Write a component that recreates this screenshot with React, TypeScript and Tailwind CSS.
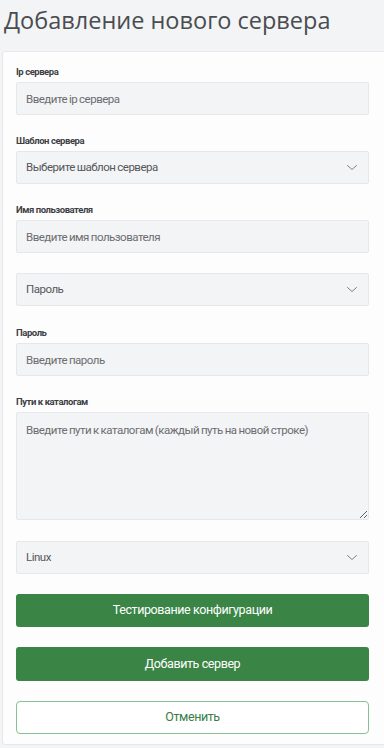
import React from "react";

const Chevron = () => (
  <svg width="12" height="7" viewBox="0 0 12 7" fill="none" stroke="#808080" strokeWidth="1" strokeLinecap="round" strokeLinejoin="round">
    <path d="M1.5 1.5l4.5 4 4.5-4" />
  </svg>
);

const Label = ({ children }: { children: React.ReactNode }) => (
  <label className="block mb-[4px] text-[9.5px] leading-[12px] font-bold text-[#3d3f44] tracking-[-0.45px]">
    {children}
  </label>
);

const inputCls =
  "block w-full h-[33px] px-[9px] bg-[#f3f4f6] border border-[#e5e7eb] rounded-[2px] text-[11.5px] tracking-[-0.5px] [word-spacing:-0.5px] text-[#374151] placeholder:text-[#6b6d70] outline-none";

const Select = ({ value }: { value: string }) => (
  <div className="flex items-center justify-between h-[33px] pl-[9px] pr-[10px] bg-[#f3f4f6] border border-[#e5e7eb] rounded-[2px] text-[11.5px] tracking-[-0.5px] [word-spacing:-0.5px] text-[#55575b]">
    <span>{value}</span>
    <Chevron />
  </div>
);

export default function App() {
  return (
    <div className="min-h-screen w-full overflow-hidden bg-[#f3f4f6] font-['Roboto',sans-serif]">
      <h1 className="pl-[4px] pt-[2px] h-[51px] text-[23.5px] leading-[36px] text-[#4a4c50] font-['Open_Sans',sans-serif]">
        Добавление нового сервера
      </h1>
      <div className="ml-[2px] w-[392px] bg-[#fdfdfe] border border-[#e5e7eb] rounded-[3px] pl-[13px] pr-[24px] pt-[14px] pb-[10px]">
        <div className="mb-5">
          <Label>Ip сервера</Label>
          <input className={inputCls} placeholder="Введите ip сервера" />
        </div>
        <div className="mb-5">
          <Label>Шаблон сервера</Label>
          <Select value="Выберите шаблон сервера" />
        </div>
        <div className="mb-5">
          <Label>Имя пользователя</Label>
          <input className={inputCls} placeholder="Введите имя пользователя" />
        </div>
        <div className="mb-[21px]">
          <Select value="Пароль" />
        </div>
        <div className="mb-5">
          <Label>Пароль</Label>
          <input className={inputCls} placeholder="Введите пароль" />
        </div>
        <div className="mb-[21px]">
          <Label>Пути к каталогам</Label>
          <textarea
            className="block w-full h-[108px] px-[9px] pt-[9px] bg-[#f3f4f6] border border-[#e5e7eb] rounded-[2px] text-[11.5px] tracking-[-0.5px] [word-spacing:-0.5px] leading-[16px] text-[#374151] placeholder:text-[#6b6d70] outline-none"
            placeholder="Введите пути к каталогам (каждый путь на новой строке)"
          />
        </div>
        <div className="mb-5">
          <Select value="Linux" />
        </div>
        <button className="block w-full h-[33px] mb-5 bg-[#3a8545] rounded-[3px] text-[12.5px] tracking-[-0.4px] text-white">
          Тестирование конфигурации
        </button>
        <button className="block w-full h-[34px] mb-5 bg-[#3a8545] rounded-[3px] text-[12.5px] tracking-[-0.4px] text-white">
          Добавить сервер
        </button>
        <button className="block w-full h-[33px] bg-white border-[1.5px] border-[#86c191] rounded-[4px] text-[12.5px] tracking-[-0.4px] text-[#3a7d46]">
          Отменить
        </button>
      </div>
    </div>
  );
}
